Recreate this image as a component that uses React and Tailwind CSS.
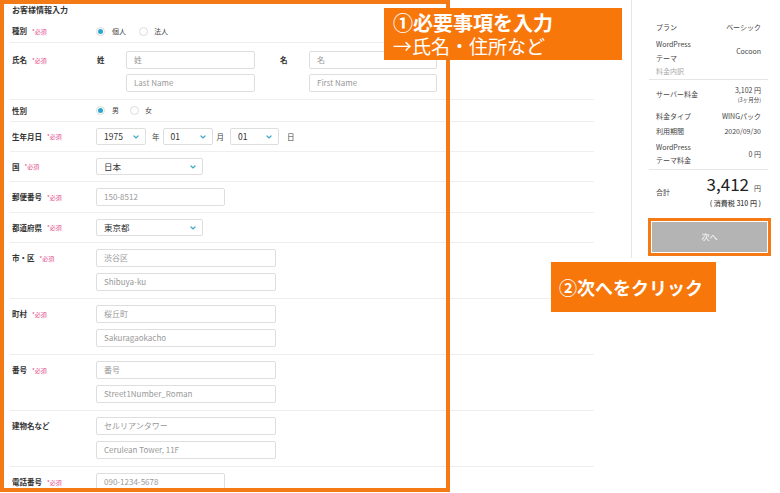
const font = "font-['Noto_Sans_CJK_JP','Noto_Sans',sans-serif]";

function Req() {
  return <span className="ml-[5px] text-[6px] font-normal text-[#e24d8c]">*必須</span>;
}

function Label({ text, req, h = "h-full" }) {
  return (
    <div className={`flex w-[86px] shrink-0 items-center pl-[2px] text-[7.5px] font-bold text-[#333] ${h}`}>
      {text}
      {req && <Req />}
    </div>
  );
}

function Field({ text, w, h = "h-[18px]" }) {
  return (
    <div className={`flex items-center rounded-[2px] border border-[#dedede] bg-white pl-[7px] text-[8px] text-[#999] ${w} ${h}`}>
      {text}
    </div>
  );
}

function Chevron() {
  return (
    <svg width="6" height="4" viewBox="0 0 6 4" fill="none">
      <path d="M1 1l2 2 2-2" stroke="#3ba8c7" strokeWidth="1.2" strokeLinecap="round" />
    </svg>
  );
}

function Select({ text, w }) {
  return (
    <div className={`flex h-[17px] items-center justify-between rounded-[2px] border border-[#dedede] bg-white pl-[7px] pr-[6px] text-[8.5px] text-[#333] ${w}`}>
      <span>{text}</span>
      <Chevron />
    </div>
  );
}

function Radio({ on }) {
  return (
    <span className="flex h-[9px] w-[9px] items-center justify-center rounded-full border border-[#dcdcdc] bg-white">
      {on && <span className="h-[5px] w-[5px] rounded-full bg-[#2aa7cf]" />}
    </span>
  );
}

function Row({ h, children, align = "items-center" }) {
  return <div className={`flex border-b border-[#eeeeee] ${align} ${h}`}>{children}</div>;
}

function DoubleRow({ label, req, a, b, w = "w-[180px]" }) {
  return (
    <Row h="h-[56px]" align="items-start">
      <div className="flex pt-[6px]">
        <Label text={label} req={req} h="h-[18px]" />
        <div className="flex flex-col gap-[6px]">
          <Field text={a} w={w} />
          <Field text={b} w={w} />
        </div>
      </div>
    </Row>
  );
}

function SideRow({ left, right, h }) {
  return (
    <div className={`flex items-center justify-between px-[7px] ${h}`}>
      <div>{left}</div>
      <div className="text-right">{right}</div>
    </div>
  );
}

export default function App() {
  return (
    <div className={`relative h-[493px] w-[780px] overflow-hidden bg-white ${font}`}>
      <div className="flex">
        {/* form */}
        <div className="w-[594px] pl-[10px]">
          <div className="flex h-[20px] items-center pl-[2px] text-[8px] font-bold text-[#333]">お客様情報入力</div>

          <Row h="h-[23px]">
            <Label text="種別" req />
            <div className="flex items-center text-[7px] text-[#444]">
              <Radio on />
              <span className="ml-[7px]">個人</span>
              <span className="ml-[13px]"><Radio /></span>
              <span className="ml-[6px]">法人</span>
            </div>
          </Row>

          <Row h="h-[57px]" align="items-start">
            <div className="flex pt-[8px]">
              <Label text="氏名" req h="h-[18px]" />
              <div className="flex">
                <div className="w-[30px] pl-[1px] text-[7.5px] font-bold leading-[18px] text-[#333]">姓</div>
                <div className="flex flex-col gap-[5px]">
                  <Field text="姓" w="w-[129px]" />
                  <Field text="Last Name" w="w-[129px]" />
                </div>
                <div className="w-[54px] pl-[25px] text-[7.5px] font-bold leading-[18px] text-[#333]">名</div>
                <div className="flex flex-col gap-[5px]">
                  <Field text="名" w="w-[128px]" />
                  <Field text="First Name" w="w-[128px]" />
                </div>
              </div>
            </div>
          </Row>

          <Row h="h-[22px]">
            <Label text="性別" />
            <div className="flex items-center text-[7px] text-[#444]">
              <Radio on />
              <span className="ml-[7px]">男</span>
              <span className="ml-[11px]"><Radio /></span>
              <span className="ml-[6px]">女</span>
            </div>
          </Row>

          <Row h="h-[30px]">
            <Label text="生年月日" req />
            <div className="flex items-center text-[7.5px] text-[#444]">
              <Select text="1975" w="w-[50px]" />
              <span className="ml-[6px]">年</span>
              <span className="ml-[3px]"><Select text="01" w="w-[50px]" /></span>
              <span className="ml-[4px]">月</span>
              <span className="ml-[6px]"><Select text="01" w="w-[49px]" /></span>
              <span className="ml-[8px]">日</span>
            </div>
          </Row>

          <Row h="h-[30px]">
            <Label text="国" req />
            <Select text="日本" w="w-[107px]" />
          </Row>

          <Row h="h-[31px]">
            <Label text="郵便番号" req />
            <Field text="150-8512" w="w-[129px]" />
          </Row>

          <Row h="h-[30px]">
            <Label text="都道府県" req />
            <Select text="東京都" w="w-[107px]" />
          </Row>

          <DoubleRow label="市・区" req a="渋谷区" b="Shibuya-ku" />
          <DoubleRow label="町村" req a="桜丘町" b="Sakuragaokacho" />
          <DoubleRow label="番号" req a="番号" b="Street1Number_Roman" />
          <DoubleRow label="建物名など" a="セルリアンタワー" b="Cerulean Tower, 11F" />

          <div className="flex pt-[6px]">
            <Label text="電話番号" req h="h-[18px]" />
            <Field text="090-1234-5678" w="w-[129px]" />
          </div>
        </div>

        {/* summary */}
        <div className="ml-[37px] h-[258px] w-[149px] border-l border-[#e6e6e6] pl-[17px] pr-[12px] pt-[20px] text-[7px] text-[#444]">
          <SideRow h="h-[14px]" left="プラン" right="ベーシック" />
          <SideRow
            h="mt-[2px] h-[30px]"
            left={<div className="leading-[14px]">WordPress<br />テーマ</div>}
            right="Cocoon"
          />
          <div className="flex h-[14px] items-center border-b border-[#e6e6e6] px-[7px] pb-[3px] text-[#aaa]">料金内訳</div>
          <SideRow
            h="h-[28px]"
            left="サーバー料金"
            right={
              <div className="leading-[11px]">
                3,102 円
                <div className="text-[5.5px] leading-[8px]">(3ヶ月分)</div>
              </div>
            }
          />
          <SideRow h="h-[16px]" left="料金タイプ" right="WINGパック" />
          <SideRow h="h-[15px]" left="利用期間" right="2020/09/30" />
          <div className="flex h-[31px] items-center justify-between border-b border-[#e6e6e6] px-[7px]">
            <div className="leading-[13px]">WordPress<br />テーマ料金</div>
            <div>0 円</div>
          </div>
          <div className="flex justify-between px-[7px] pt-[4px]">
            <div className="pt-[13px]">合計</div>
            <div className="flex flex-col items-end">
              <div className="flex items-baseline leading-[20px]">
                <span className="text-[17px] font-normal text-[#222]">3,412</span>
                <span className="ml-[5px] text-[7px]">円</span>
              </div>
              <div className="text-[7px] font-medium leading-[11px]">( 消費税 310 円 )</div>
            </div>
          </div>
          <div className="mt-[13px] ml-[3px] mr-[1px] flex h-[30px] items-center justify-center bg-[#b4b4b4] text-[8px] text-white outline-[3px] outline-offset-[1px] outline-[#f47a16]">
            次へ
          </div>
        </div>
      </div>

      {/* annotations */}
      <div className="absolute left-0 top-0 h-[492px] w-[450px] border-[4px] border-[#f47a16]" />
      <div className="absolute left-[384px] top-[8px] h-[52px] w-[238px] bg-[#f7770b] pl-[9px] pt-[3px] text-white">
        <div className="text-[20px] font-bold leading-[23px]">①必要事項を入力</div>
        <div className="text-[19px] leading-[23px]">→氏名・住所など</div>
      </div>
      <div className="absolute left-[551px] top-[262px] flex h-[50px] w-[165px] items-center bg-[#f7770b] pl-[8px] text-[18px] font-bold text-white">
        ②次へをクリック
      </div>
    </div>
  );
}
